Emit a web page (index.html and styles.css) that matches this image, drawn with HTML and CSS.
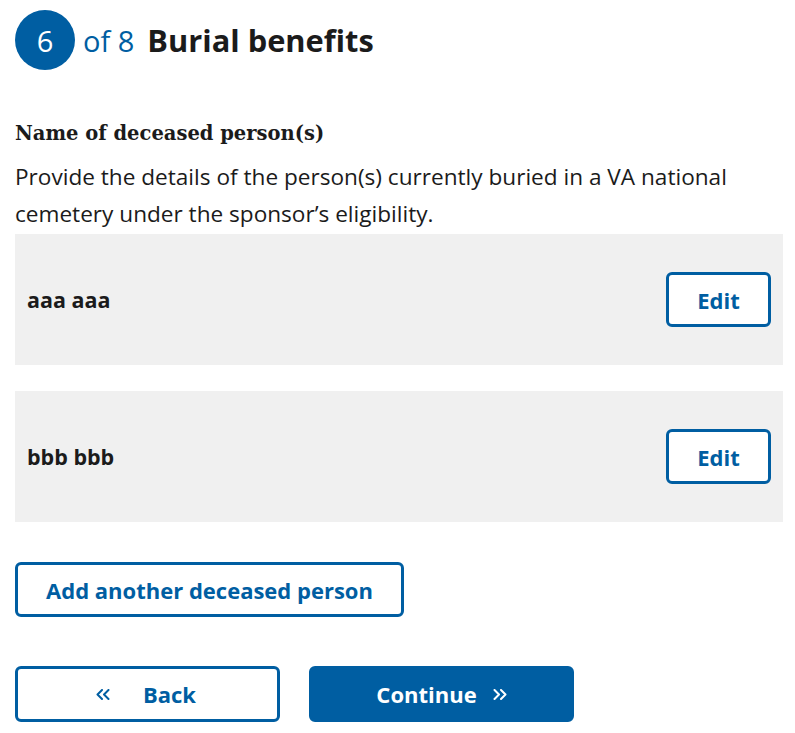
FILE: index.html
```html
<!DOCTYPE html>
<html lang="en">
<head>
<meta charset="utf-8">
<title>Burial benefits</title>
<link rel="stylesheet" href="styles.css">
</head>
<body>
<main class="page">
  <header class="progress">
    <span class="step-circle">6</span>
    <span class="step-of">of 8</span>
    <h1 class="step-title">Burial benefits</h1>
  </header>

  <section class="form">
    <h2 class="label">Name of deceased person(s)</h2>
    <p class="intro">Provide the details of the person(s) currently buried in a VA national cemetery under the sponsor’s eligibility.</p>

    <ul class="list">
      <li class="item">
        <span class="item-name">aaa aaa</span>
        <button class="btn btn-outline btn-edit" type="button">Edit</button>
      </li>
      <li class="item">
        <span class="item-name">bbb bbb</span>
        <button class="btn btn-outline btn-edit" type="button">Edit</button>
      </li>
    </ul>

    <button class="btn btn-outline btn-add" type="button">Add another deceased person</button>

    <div class="nav">
      <button class="btn btn-outline btn-nav btn-back" type="button">
        <svg class="chev chev-l" width="14" height="11" viewBox="0 0 14 11" aria-hidden="true"><path d="M6 1 L1.5 5.5 L6 10 M12.5 1 L8 5.5 L12.5 10" fill="none" stroke="currentColor" stroke-width="2" stroke-linecap="round" stroke-linejoin="round"/></svg>
        Back
      </button>
      <button class="btn btn-primary btn-nav btn-continue" type="button">
        Continue
        <svg class="chev chev-r" width="14" height="11" viewBox="0 0 14 11" aria-hidden="true"><path d="M1.5 1 L6 5.5 L1.5 10 M8 1 L12.5 5.5 L8 10" fill="none" stroke="currentColor" stroke-width="2" stroke-linecap="round" stroke-linejoin="round"/></svg>
      </button>
    </div>
  </section>
</main>
</body>
</html>
```

FILE: styles.css
```css
* { box-sizing: border-box; }

body {
  margin: 0;
  background: #ffffff;
  color: #1b1b1b;
  font-family: "Open Sans", "Noto Sans", sans-serif;
}

.page {
  padding: 10px 12px 0 15px;
}

.progress {
  display: flex;
  align-items: center;
  height: 60px;
}

.step-circle {
  width: 60px;
  height: 60px;
  border-radius: 50%;
  background: #005ea2;
  color: #ffffff;
  font-size: 29px;
  display: flex;
  align-items: center;
  justify-content: center;
  flex: none;
}

.step-of {
  color: #005ea2;
  font-size: 29px;
  margin-left: 8px;
}

.step-title {
  margin: 0 0 0 13px;
  font-size: 30.8px;
  font-weight: 700;
}

.form {
  margin-top: 50px;
}

.label {
  margin: 0;
  font-family: "DejaVu Serif", serif;
  font-size: 19.5px;
  font-weight: 700;
  line-height: 28px;
}

.intro {
  margin: 10px 0 2px;
  font-size: 22.6px;
  line-height: 37px;
}

.list {
  list-style: none;
  margin: 0;
  padding: 0;
  display: flex;
  flex-direction: column;
  gap: 26px;
}

.item {
  background: #f0f0f0;
  height: 131px;
  display: flex;
  align-items: center;
  justify-content: space-between;
  padding: 0 12px;
}

.item-name {
  font-size: 21.5px;
  font-weight: 700;
}

.btn {
  font-family: inherit;
  font-weight: 700;
  font-size: 22px;
  border-radius: 6px;
  cursor: pointer;
  display: inline-flex;
  align-items: center;
  justify-content: center;
}

.btn-outline {
  background: #ffffff;
  color: #005ea2;
  border: 3px solid #005ea2;
}

.btn-primary {
  background: #005ea2;
  color: #ffffff;
  border: 3px solid #005ea2;
}

.btn-edit {
  width: 105px;
  height: 55px;
}

.btn-add {
  margin-top: 40px;
  width: 389px;
  height: 55px;
}

.nav {
  display: flex;
  gap: 29px;
  margin-top: 49px;
}

.btn-nav {
  width: 265px;
  height: 56px;
}

.btn-back {
  padding-right: 9px;
}

.btn-continue {
  padding-right: 6px;
}

.chev {
  flex: none;
}

.chev-l {
  margin-right: 33px;
}

.chev-r {
  margin-left: 16px;
}
```
